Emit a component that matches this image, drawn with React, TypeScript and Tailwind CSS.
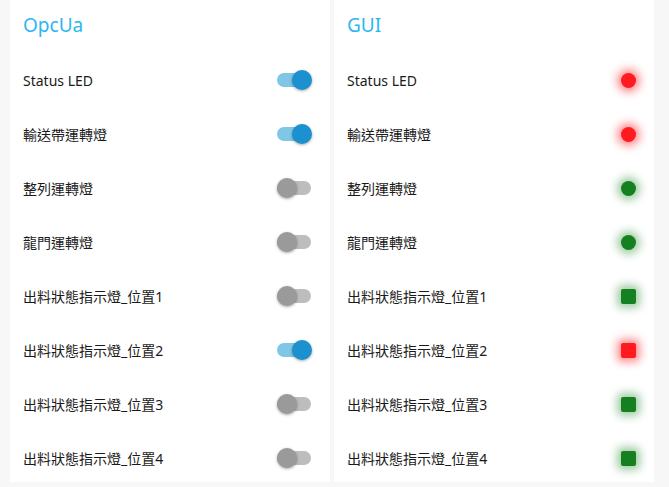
import React from "react";

type Led = { color: "red" | "green"; shape: "round" | "square" };

const rows: { label: string; switchOn: boolean; led: Led }[] = [
  { label: "Status LED", switchOn: true, led: { color: "red", shape: "round" } },
  { label: "輸送帶運轉燈", switchOn: true, led: { color: "red", shape: "round" } },
  { label: "整列運轉燈", switchOn: false, led: { color: "green", shape: "round" } },
  { label: "龍門運轉燈", switchOn: false, led: { color: "green", shape: "round" } },
  { label: "出料狀態指示燈_位置1", switchOn: false, led: { color: "green", shape: "square" } },
  { label: "出料狀態指示燈_位置2", switchOn: true, led: { color: "red", shape: "square" } },
  { label: "出料狀態指示燈_位置3", switchOn: false, led: { color: "green", shape: "square" } },
  { label: "出料狀態指示燈_位置4", switchOn: false, led: { color: "green", shape: "square" } },
];

const Toggle = ({ on }: { on: boolean }) => (
  <div className="relative w-[35px] h-[20px] flex items-center">
    <div className={`w-[34px] h-[14px] rounded-full ${on ? "bg-[#80c6e6]" : "bg-[#bdbdbd]"}`}></div>
    <div
      className={`absolute top-0 w-[20px] h-[20px] rounded-full shadow-[0_1px_3px_rgba(0,0,0,0.35)] ${
        on ? "left-[15px] bg-[#1b92cf]" : "left-0 bg-[#9a9a9a]"
      }`}
    ></div>
  </div>
);

const LedLight = ({ led }: { led: Led }) => {
  const color =
    led.color === "red"
      ? "bg-[#ff1a1f] shadow-[0_0_8px_4px_rgba(255,30,35,0.5)]"
      : "bg-[#15801f] shadow-[0_0_8px_4px_rgba(21,128,31,0.4)]";
  const shape = led.shape === "round" ? "w-[15px] h-[15px] rounded-full" : "w-[15px] h-[15px] rounded-[2px]";
  return <div className={`${shape} ${color}`}></div>;
};

const Card = ({ title, children }: { title: string; children: React.ReactNode }) => (
  <div className="w-[320px] h-[482px] bg-white overflow-hidden px-[13px]">
    <div className="h-[53px] flex items-center text-[19px] text-[#2cb6f2] pb-[3px]">{title}</div>
    {children}
  </div>
);

export default function App() {
  return (
    <div
      className="w-[669px] h-[487px] bg-[#f7f7f7] pl-[10px] flex gap-[4px] text-[14px] text-[#1a1a1a]"
      style={{ fontFamily: '"Noto Sans", "Noto Sans CJK TC", sans-serif' }}
    >
      <Card title="OpcUa">
        {rows.map((r, i) => (
          <div key={i} className="h-[54px] flex items-center justify-between pr-[5px]">
            <span>{r.label}</span>
            <Toggle on={r.switchOn} />
          </div>
        ))}
      </Card>
      <Card title="GUI">
        {rows.map((r, i) => (
          <div key={i} className="h-[54px] flex items-center justify-between pr-[5px]">
            <span>{r.label}</span>
            <LedLight led={r.led} />
          </div>
        ))}
      </Card>
    </div>
  );
}
